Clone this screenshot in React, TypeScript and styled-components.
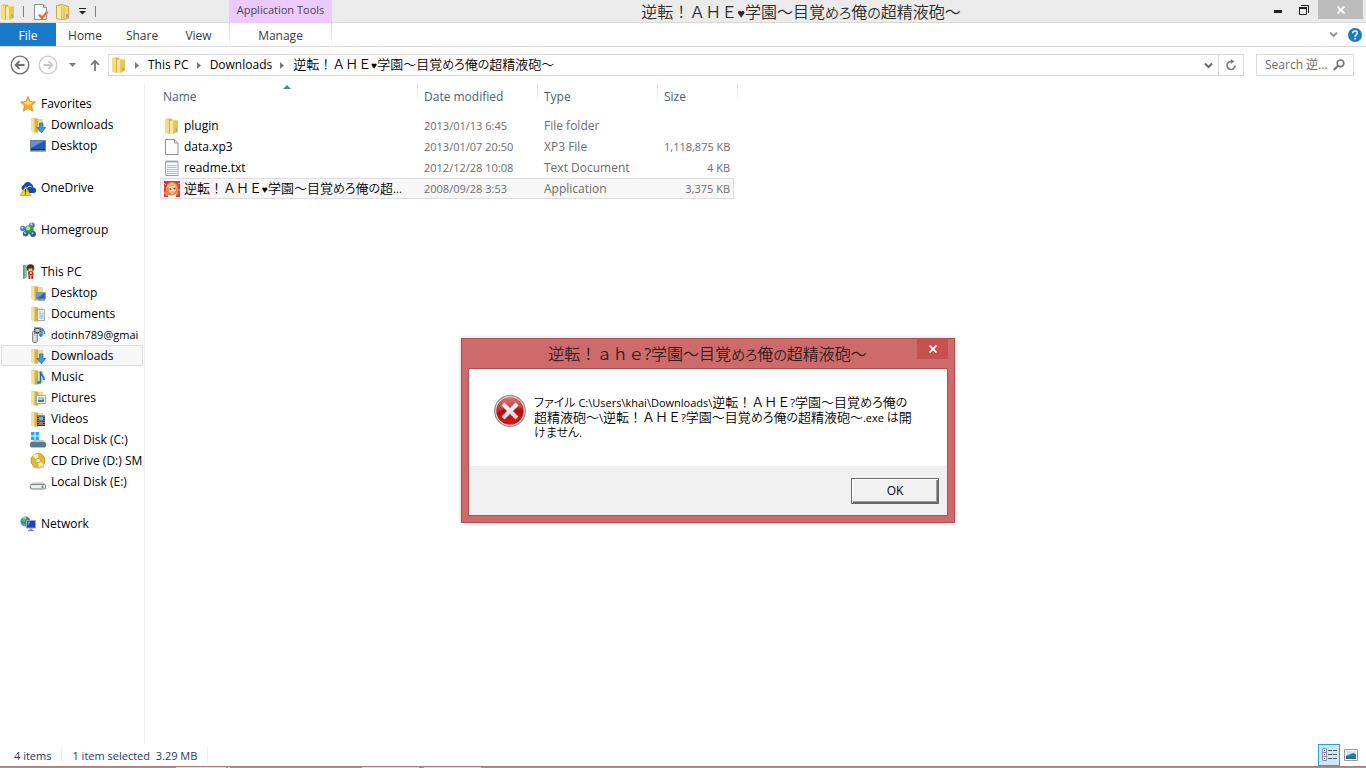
import React from "react";
import styled, { createGlobalStyle, css } from "styled-components";

const Global = createGlobalStyle`
  *, *::before, *::after { box-sizing: border-box; }
  body {
    margin: 0;
    background: #fff;
    color: #000;
    font-family: "Open Sans", "Noto Sans CJK JP", sans-serif;
    font-size: 12px;
    line-height: 16px;
  }
  button, input { font: inherit; color: inherit; }
  button { background: none; border: 0; padding: 0; }
  svg { display: block; flex: none; }
`;

/* ---------- Japanese text with proportional kana ---------- */

const JpText = styled.span<{ $large?: boolean }>`
  font-size: ${(p) => (p.$large ? 16 : 13)}px;
  font-weight: 350;
  white-space: nowrap;
`;
const Kana = styled.span<{ $large?: boolean }>`
  font-size: ${(p) => (p.$large ? 14 : 12)}px;
  font-feature-settings: "palt";
`;
const Heart = styled.span<{ $large?: boolean }>`
  font-family: "DejaVu Sans", sans-serif;
  font-size: ${(p) => (p.$large ? 13 : 10)}px;
`;
const Latin = styled.span<{ $large?: boolean }>`
  font-size: ${(p) => (p.$large ? 16 : 11)}px;
  font-weight: 400;
`;

function Jp({ text, large }: { text: string; large?: boolean }) {
  const runs = text.split(/([\u3040-\u30ff]+|♥|[ -~]+)/).filter(Boolean);
  return (
    <JpText $large={large}>
      {runs.map((run, i) => {
        if (run === "♥") return <Heart key={i} $large={large}>{run}</Heart>;
        if (/^[\u3040-\u30ff]/.test(run)) return <Kana key={i} $large={large}>{run}</Kana>;
        if (/^[ -~]/.test(run)) return <Latin key={i} $large={large}>{run}</Latin>;
        return run;
      })}
    </JpText>
  );
}

/* ---------- Icons ---------- */

const Svg16 = ({ children }: { children: React.ReactNode }) => (
  <svg width="16" height="16" viewBox="0 0 16 16" aria-hidden="true">{children}</svg>
);

const FolderIcon = () => (
  <Svg16>
    <path d="M1 1 5.500.3 8 1v13.500L5 16l-4-1.800z" fill="#e3c255" />
    <path d="M1 1l4 1v13.500l-4-1.500z" fill="#f5dd80" />
    <path d="M5 2 8 1v13l-3 1.500z" fill="#d3aa3c" />
    <path d="M6 3l3-1.500 5 1V14l-5 1.800L6 15.500z" fill="#f3d873" />
    <path d="M9 3.500l5-1V14l-5 1.800z" fill="#e8c558" />
    <path d="M6 3l3 .5v12.300L6 15.500z" fill="#fae9a2" />
    <path d="M11.500 10.500H13v3h-1.500z" fill="#6db2de" />
  </Svg16>
);

const BackFolder = () => (
  <>
    <path d="M1 1h5l2 1v13.500L5 15.500l-4-1.500z" fill="#ead07a" />
    <path d="M1 1l3.500 1v13.500L1 14z" fill="#f5e296" />
    <path d="M4.500 2 8 1.500v14h-3.500z" fill="#d6b551" />
    <path d="M8 2h5v11.500L8 15.500z" fill="#f0da8c" />
    <path d="M7 2v13" stroke="#c8a23f" strokeWidth=".7" />
  </>
);
const DownFolder = () => (
  <Svg16>
    <BackFolder />
    <path d="M9.500 6h3.500v4.500h2.700l-4.400 5.200-4.500-5.200h2.700z" fill="#3b9be0" stroke="#1d6db3" strokeWidth=".7" />
  </Svg16>
);
const DesktopFolder = () => (
  <Svg16>
    <BackFolder />
    <path d="M6.500 7.500h9V14h-9z" fill="#2f63bd" stroke="#8797ad" strokeWidth=".8" />
    <path d="M7 8h7l-6 4.500H7z" fill="#6c9ce4" />
    <path d="M8 15h7" stroke="#4a5a70" />
  </Svg16>
);
const DocsFolder = () => (
  <Svg16>
    <BackFolder />
    <path d="M7.500 3.500h7v11h-7z" fill="#fff" stroke="#8d99a8" strokeWidth=".8" />
    <path d="M9 6h2M12 6h1.500M9 8h4.500M9 10h4.500M9 12h4.500" stroke="#6b8fc0" strokeWidth=".9" />
  </Svg16>
);
const MusicFolder = () => (
  <Svg16>
    <BackFolder />
    <path d="M10.500 3c0 3 4 3.500 3.500 8" fill="none" stroke="#1f86d6" strokeWidth="2" />
    <path d="M10.500 2.500V13" stroke="#1668ad" strokeWidth="1.400" />
    <ellipse cx="9" cy="13.500" rx="2.300" ry="1.700" fill="#2b94e2" />
  </Svg16>
);
const PicsFolder = () => (
  <Svg16>
    <BackFolder />
    <path d="M6.500 5.500h9v8h-9z" fill="#fff" stroke="#8c9097" strokeWidth=".8" />
    <path d="M8 7h6v2.500H8z" fill="#8fc9f1" />
    <path d="M8 9.500l3 .5 3-1V12H8z" fill="#3d8a71" />
  </Svg16>
);
const VideoFolder = () => (
  <Svg16>
    <BackFolder />
    <path d="M7 4.500h8v10.500H7z" fill="#30343c" />
    <path d="M9 5.500h4v4H9z" fill="#7fa8e0" />
    <path d="M9 10.500h4V14H9z" fill="#b4735a" />
    <path d="M8 5v10M14 5v10" stroke="#d8dde5" strokeWidth=".9" strokeDasharray="1 1" />
  </Svg16>
);
const StarIcon = () => (
  <Svg16>
    <path d="M8 .5l2.200 4.900 5.300.7-4 3.500 1.200 5.500L8 12.300l-4.700 2.800 1.200-5.500L.5 6.100l5.300-.7z" fill="#fda92c" stroke="#e38a22" strokeWidth=".9" />
    <path d="M8 2.500l1.500 3.800 3.500.4-5 2.300-4.800-2.300 3.300-.4z" fill="#fee08a" />
  </Svg16>
);
const DesktopIcon = () => (
  <Svg16>
    <path d="M.5 2.500h15v10H.5z" fill="#2458b5" stroke="#6f7f96" />
    <path d="M1 3h13L1 10z" fill="#5f93e0" />
    <path d="M1 11.500h14" stroke="#1c2f4f" />
    <path d="M0 13.500h16" stroke="#a3adba" />
  </Svg16>
);
const OneDriveIcon = () => (
  <Svg16>
    <path d="M1.500 8.500A4 4 0 0 1 4 4.500 4 4 0 0 1 11 3.500 3.500 3.500 0 0 1 13 7.500 2.800 2.800 0 0 1 14 13H5z" fill="#0f4fb3" />
    <path d="M6.500 10.500c-.5-3 2-5 5-3.800" stroke="#fff" strokeWidth=".9" fill="none" />
    <path d="M5.500 6.500 10.800 15.500H.2z" fill="#fcd21c" stroke="#c29400" strokeWidth=".7" />
    <path d="M5.500 9v3.500M5.500 13.300v1.200" stroke="#222" strokeWidth="1.200" />
  </Svg16>
);
const HomegroupIcon = () => (
  <Svg16>
    <circle cx="12" cy="3.200" r="2.800" fill="#4a6fc6" />
    <circle cx="11.500" cy="2.400" r="1.100" fill="#cbdafb" />
    <circle cx="9.200" cy="7.800" r="4.600" fill="#38a33c" />
    <circle cx="8.200" cy="6.300" r="2" fill="#b5eaa9" />
    <circle cx="2.800" cy="6.500" r="2.700" fill="#4f74cf" />
    <circle cx="2.400" cy="5.800" r="1.100" fill="#c5d6fa" />
    <circle cx="5.500" cy="11.800" r="2.700" fill="#3b5fc0" />
    <circle cx="5" cy="11" r="1" fill="#bacbf5" />
    <circle cx="13" cy="12" r="2.900" fill="#3b4f9e" />
    <circle cx="12.500" cy="11.200" r="1" fill="#bacbf5" />
  </Svg16>
);
const UserIcon = () => (
  <Svg16>
    <path d="M3 1l4-.5v13L3 15z" fill="#7cc4ad" />
    <path d="M3 1l1.500.3v13L3 15z" fill="#549c8b" />
    <circle cx="10.500" cy="4" r="3.800" fill="#5b2a18" />
    <path d="M8.500 4.500h4V7h-4z" fill="#f2c29b" />
    <path d="M8 7.500h5.500v4H8z" fill="#dc2c22" />
    <path d="M8.500 11.500h1.800V15H8.500zM11.300 11.500H13V15h-1.700z" fill="#c2241b" />
    <path d="M10 8h1.500v2H10z" fill="#fff" />
  </Svg16>
);
const DeviceIcon = () => (
  <Svg16>
    <rect x="2.500" y="4" width="5" height="11.500" rx="1.500" fill="#c9ccd0" stroke="#74787e" strokeWidth=".8" />
    <path d="M4 .5h7v6H4z" fill="#40464d" />
    <path d="M5.500 2h4v3h-4z" fill="#a9d0ec" />
    <path d="M5 1v5M10 1v5" stroke="#e8ebee" strokeWidth=".8" strokeDasharray="1 1" />
    <path d="M12 1v7M12 1c0 2 3 2 2.500 6" fill="none" stroke="#1f86d6" strokeWidth="1.400" />
    <circle cx="10.800" cy="8.300" r="1.700" fill="#1f86d6" />
    <path d="M5 9v4" stroke="#f2f3f4" />
  </Svg16>
);
const DriveShape = ({ top, front }: { top: string; front: string }) => (
  <>
    <path d="M3 8h10l3 3H0z" fill={top} />
    <rect x=".5" y="10.500" width="15" height="4.500" rx="1" fill={front} stroke="#6b7178" strokeWidth=".9" />
    <path d="M12.500 11.500v2.500" stroke="#36b32d" strokeWidth="1.500" />
  </>
);
const WinDriveIcon = () => (
  <Svg16>
    <DriveShape top="#b5c3cd" front="#4f7c8c" />
    <path d="M1 0h3.500v3.500H1zM5.500 0H9v3.500H5.500zM1 4.500h3.500V8H1zM5.500 4.500H9V8H5.500z" fill="#19b1ea" />
  </Svg16>
);
const DriveIcon = () => <Svg16><DriveShape top="#d2d4d8" front="#eceded" /></Svg16>;
const DiscIcon = () => (
  <Svg16>
    <circle cx="8" cy="7.500" r="7" fill="#e3ba2e" stroke="#b28d1e" strokeWidth=".8" />
    <path d="M8 7.500 2.500 3A7 7 0 0 1 8 .8zM8 7.500l6 3.800A7 7 0 0 1 9 14.300z" fill="#fbeeb0" />
    <circle cx="8" cy="7.500" r="2.200" fill="#fff" stroke="#b59a45" strokeWidth=".7" />
    <path d="M2 12.500c3 2.500 9 2.500 12 0v1.800c-3 1.800-9 1.800-12 0z" fill="#c5c7ca" />
  </Svg16>
);
const NetworkIcon = () => (
  <Svg16>
    <circle cx="5.500" cy="5.500" r="5" fill="#2f86cf" />
    <path d="M2 2.500c2-2 4-1.500 5 0L5 5 3 6zM2.500 7.500l3 .5-.5 2.500z" fill="#5dc04a" />
    <path d="M3 1.500l3 .5" stroke="#d4f0ff" />
    <path d="M6.500 4.500h9v7.500h-9z" fill="#1c3fc4" stroke="#9aa7bc" />
    <path d="M7.500 5.500h3L8 10z" fill="#6d8ff0" />
    <path d="M9.500 12.500h3V14h-3zM8 14h6v1.200H8z" fill="#8a94a3" />
  </Svg16>
);
const BlankFileIcon = () => (
  <Svg16>
    <path d="M1.500.5h9l3.500 3.500v11.500H1.500z" fill="#fcfcfc" stroke="#8f8f8f" />
    <path d="M10.500.5V4H14" fill="#e6e6e6" stroke="#a2a2a2" />
  </Svg16>
);
const TextFileIcon = () => (
  <Svg16>
    <path d="M1.500 1.500h12.500v14H1.500z" fill="#f6fafc" stroke="#98a2a8" />
    <path d="M3 0v3M5 0v3M7 0v3M9 0v3M11 0v3M13 0v3" stroke="#a7b0b5" />
    <path d="M3 5.500h9.500M3 7.500h9.500M3 9.500h9.500M3 11.500h9.500M3 13.500h9.500" stroke="#9fbdd0" strokeWidth=".9" />
  </Svg16>
);
const GameIcon = () => (
  <Svg16>
    <path d="M0 0h16v16H0z" fill="#d3384d" />
    <path d="M1.500 15C1 8 2 1 8 1s7 6 6 13z" fill="#e38a3e" />
    <path d="M4.500 5.500 11 4.500l1 4.500-3.500 4.500L5 10.500z" fill="#fcdcc4" />
    <path d="M2.500 8C3 4 6 2 8 1.500c2 .5 4.500 2.500 5 6-2-3-4-3.500-5-3.500S4.500 5 2.500 8z" fill="#fbc566" />
    <path d="M5.500 8h1.800M9.500 7.500h1.800" stroke="#7a2231" strokeWidth="1.300" />
    <path d="M7.500 11h2" stroke="#d2525a" />
    <path d="M4 14l4 .5 4-1.500v3H4z" fill="#fff" />
    <path d="M0 2l2 2M14 3l2-1M0 12h2M14.500 8l1.500 2" stroke="#f6a2b4" />
  </Svg16>
);
const PropertiesIcon = () => (
  <Svg16>
    <path d="M1.500.5h9l3 3v12h-12z" fill="#fbfbfd" stroke="#8b8f99" />
    <path d="M10.500.5v3h3" fill="#dfe3ea" stroke="#8b8f99" />
    <path d="M6 10.500l3 3.500 5.500-6.500" fill="none" stroke="#e8703f" strokeWidth="2.600" />
  </Svg16>
);
const NewFolderIcon = () => (
  <Svg16>
    <path d="M.5 1.500 6 .5l6.500 2v12L6 15.500l-5.500-1z" fill="#f4d774" stroke="#dba63a" />
    <path d="M1 2l4 .8V15l-4-1z" fill="#fbecb0" />
    <path d="M5.500 3v12M8 4v11" stroke="#e0b04a" strokeWidth=".8" />
    <path d="M10 10h1.800v3.500H10z" fill="#6aaede" />
  </Svg16>
);
const CustomizeIcon = () => (
  <svg width="7" height="7" viewBox="0 0 7 7" aria-hidden="true">
    <path d="M0 .5h7" stroke="#222" />
    <path d="M0 3h7L3.500 6.500z" fill="#222" />
  </svg>
);
const NavIcon = ({ forward }: { forward?: boolean }) => (
  <svg width="20" height="20" viewBox="0 0 20 20" fill="none" stroke={forward ? "#c9c9c9" : "#6e6e6e"} aria-hidden="true">
    <circle cx="10" cy="10" r="8.800" strokeWidth="1.300" />
    <path d={forward ? "M5.500 10h8.500M10.500 6.200l3.800 3.800-3.800 3.800" : "M14.500 10H6M9.500 6.200 5.700 10l3.800 3.800"} strokeWidth="1.900" />
  </svg>
);
const CaretIcon = () => (
  <svg width="7" height="4" viewBox="0 0 7 4" aria-hidden="true"><path d="M0 0h7L3.500 4z" fill="#7a7a7a" /></svg>
);
const UpIcon = () => (
  <svg width="10" height="13" viewBox="0 0 10 13" fill="none" stroke="#777" strokeWidth="1.800" aria-hidden="true">
    <path d="M5 12V2M1 6l4-4.200L9 6" />
  </svg>
);
const CrumbArrow = () => (
  <svg width="4" height="7" viewBox="0 0 4 7" aria-hidden="true"><path d="M0 0l4 3.500L0 7z" fill="#777" /></svg>
);
const ChevronIcon = ({ color = "#6b6b6b" }: { color?: string }) => (
  <svg width="9" height="7" viewBox="0 0 9 7" fill="none" stroke={color} strokeWidth="2" aria-hidden="true">
    <path d="M1 1.500l3.500 3.500L8 1.500" />
  </svg>
);
const RefreshIcon = () => (
  <svg width="12" height="12" viewBox="0 0 12 12" fill="none" stroke="#777" strokeWidth="1.600" aria-hidden="true">
    <path d="M10 6.500A4 4 0 1 1 6.500 2.500" />
    <path d="M5.800 0v5l3.600-2.500z" fill="#777" stroke="none" />
  </svg>
);
const SearchIcon = () => (
  <svg width="12" height="12" viewBox="0 0 12 12" fill="none" stroke="#777" aria-hidden="true">
    <circle cx="7.500" cy="4.300" r="3.300" strokeWidth="1.700" />
    <path d="M5 6.800.8 11" strokeWidth="2" />
  </svg>
);
const HelpIcon = () => (
  <svg width="14" height="14" viewBox="0 0 14 14" aria-hidden="true">
    <circle cx="7" cy="7" r="7" fill="#1979ca" />
    <path d="M4.800 5.200C4.800 2.300 9.300 2.300 9.300 5c0 1.800-2.200 1.800-2.200 3.700M7.100 9.800v1.800" fill="none" stroke="#fff" strokeWidth="1.600" />
  </svg>
);
const MinimizeIcon = () => (
  <svg width="8" height="6" viewBox="0 0 8 6" aria-hidden="true"><path d="M0 3h8v3H0z" fill="#222" /></svg>
);
const RestoreIcon = () => (
  <svg width="10" height="10" viewBox="0 0 10 10" fill="none" stroke="#222" aria-hidden="true">
    <path d="M.5 3v6.500h7V3M2 .5h7.500V8" />
    <path d="M0 3h8" strokeWidth="2" />
  </svg>
);
const CloseIcon = () => (
  <svg width="8" height="8" viewBox="0 0 8 8" fill="none" stroke="#fff" strokeWidth="1.800" aria-hidden="true">
    <path d="M.5.5l7 7M7.500.5l-7 7" />
  </svg>
);
const ErrorIcon = () => (
  <svg width="32" height="32" viewBox="0 0 32 32" aria-label="Error" role="img">
    <defs>
      <linearGradient id="err" x1="0" y1="0" x2="0" y2="1">
        <stop offset="0" stopColor="#dc5f5b" />
        <stop offset=".5" stopColor="#b30d10" />
        <stop offset="1" stopColor="#d8171a" />
      </linearGradient>
      <linearGradient id="cross" x1="0" y1="0" x2="0" y2="1">
        <stop offset="0" stopColor="#fff" />
        <stop offset="1" stopColor="#cfcfcf" />
      </linearGradient>
    </defs>
    <circle cx="16" cy="16" r="15.300" fill="#e4e4e4" stroke="#8b8b8b" strokeWidth="1.200" />
    <circle cx="16" cy="16" r="13.700" fill="url(#err)" />
    <path d="M3 14a13.200 13.200 0 0 1 26 0c-8-3-17-3-26 4z" fill="#fff" opacity=".14" />
    <path d="M10.500 7.500 16 13l5.500-5.500 3 3L19 16l5.500 5.500-3 3L16 19l-5.500 5.500-3-3L13 16l-5.500-5.500z" fill="url(#cross)" />
  </svg>
);
const DetailsViewIcon = () => (
  <svg width="15" height="14" viewBox="0 0 15 14" fill="none" aria-hidden="true">
    <path d="M.5.500h4v4h-4zM.5 4.500h4v4h-4zM.5 8.500h4v4h-4z" fill="#fff" stroke="#8394a6" />
    <path d="M2 2h1v1H2zM2 10h1v1H2z" fill="#31589c" />
    <path d="M2 6h1v1H2z" fill="#c02020" />
    <path d="M6 2.500h4M11 2.500h4M6 6.500h4M11 6.500h4M6 10.500h4M11 10.500h4" stroke="#4d5d6d" />
  </svg>
);
const ThumbViewIcon = () => (
  <svg width="14" height="12" viewBox="0 0 14 12" aria-hidden="true">
    <path d="M.5.500h13v11H.5z" fill="#fff" stroke="#9a9a9a" />
    <path d="M2 2h10v8H2z" fill="#2a78c4" />
    <path d="M2 2h10v3C9 3 6 5 2 7z" fill="#c9ebf8" />
    <path d="M2 9l4-1.500L12 9v1H2z" fill="#2f6d4c" />
  </svg>
);
const SortArrow = styled.span`
  position: absolute;
  top: 1px;
  left: 123px;
  border: 4px solid transparent;
  border-top: 0;
  border-bottom-color: #4a89ae;
`;

/* ---------- Window frame ---------- */

const Window = styled.main`
  min-height: 100vh;
  display: flex;
  flex-direction: column;
`;
const TitleBar = styled.header`
  display: flex;
  height: 23px;
  background: #ebebeb;
  border-bottom: 1px solid #d9d9d9;
`;
const QuickAccess = styled.div`
  width: 229px;
  display: flex;
  align-items: center;
  padding-top: 1px;
`;
const QuickDivider = styled.span`
  width: 1px;
  height: 11px;
  margin: 0 9px 0 7px;
  background: #808080;
  &:last-child { margin-left: 9px; }
`;
const QuickButton = styled.button`
  display: flex;
  margin-right: 7px;
  &:last-of-type { margin-right: 0; }
`;
const ContextTitle = styled.div`
  width: 103px;
  height: 23px;
  padding-top: 2px;
  text-align: center;
  font-size: 11px;
  background: #ebcbff;
  color: #4c4052;
`;
const WindowTitle = styled.h1`
  flex: 1;
  margin: 0;
  padding-left: 5px;
  font-weight: 400;
  text-align: center;
  line-height: 18px;
  color: #2b2b2b;
`;
const FrameButton = styled.button<{ $close?: boolean }>`
  width: 26px;
  height: 19px;
  display: flex;
  align-items: center;
  justify-content: center;
  ${(p) => p.$close && css`
    width: 45px;
    margin: 0 3px 0 1px;
    background: #bcbcbc;
  `}
`;

/* ---------- Ribbon ---------- */

const Ribbon = styled.nav`
  display: flex;
  align-items: center;
  height: 24px;
  border-bottom: 1px solid #d9d9d9;
`;
const RibbonTab = styled.button<{ $width: number; $file?: boolean }>`
  width: ${(p) => p.$width}px;
  height: 23px;
  color: #3b3b3b;
  padding-top: 2px;
  ${(p) => p.$file && css`
    background: #1979ca;
    color: #fff;
    margin-right: 1px;
  `}
`;
const ContextTab = styled(RibbonTab)`
  margin-left: 3px;
  border: 1px solid;
  border-width: 0 1px;
  border-image: linear-gradient(#cfcfcf, #fff) 1;
`;
const RibbonEnd = styled.div`
  margin-left: auto;
  display: flex;
  align-items: center;
  gap: 10px;
  padding-right: 4px;
`;
const IconButton = styled.button`
  display: flex;
  align-items: center;
`;

/* ---------- Address bar ---------- */

const AddressRow = styled.div`
  display: flex;
  align-items: center;
  height: 36px;
  padding: 0 12px 0 10px;
`;
const NavButtons = styled.div`
  display: flex;
  align-items: center;
  width: 98px;
`;
const NavButton = styled(IconButton)`
  &:nth-child(2) { margin-left: 8px; }
  &:nth-child(3) { margin-left: 11px; }
  &:nth-child(4) { margin-left: 14px; }
`;
const AddressBox = styled.div`
  flex: 1;
  display: flex;
  align-items: center;
  height: 22px;
  padding-left: 2px;
  border: 1px solid #d9d9d9;
`;
const Crumb = styled.a`
  display: flex;
  align-items: center;
  gap: 9px;
  margin-left: 8px;
  color: #000;
  text-decoration: none;
  white-space: nowrap;
`;
const AddressButton = styled.button<{ $divided?: boolean }>`
  width: 25px;
  height: 20px;
  display: flex;
  align-items: center;
  justify-content: center;
  ${(p) => p.$divided ? "border-left: 1px solid #d9d9d9;" : "margin-left: auto; padding-left: 6px;"}
`;
const SearchBox = styled.label`
  display: flex;
  align-items: center;
  width: 98px;
  height: 22px;
  margin-left: 12px;
  padding: 0 8px;
  border: 1px solid #d9d9d9;
`;
const SearchInput = styled.input`
  flex: 1;
  min-width: 0;
  padding: 0;
  border: 0;
  outline: 0;
  background: none;
  &::placeholder { color: #6d6d6d; opacity: 1; }
`;

/* ---------- Body ---------- */

const Body = styled.div`
  flex: 1;
  display: flex;
  padding-top: 1px;
`;
const Sidebar = styled.nav`
  width: 145px;
  padding: 9px 1px 9px;
  border-right: 1px solid #f0f0f0;
`;
const Group = styled.ul`
  list-style: none;
  margin: 0 0 21px;
  padding: 0;
`;
const TreeItem = styled.a<{ $child?: boolean; $selected?: boolean; $small?: boolean }>`
  display: flex;
  align-items: center;
  gap: 5px;
  height: 21px;
  padding-left: ${(p) => (p.$child ? 28 : 18)}px;
  border: 1px solid ${(p) => (p.$selected ? "#dedede" : "transparent")};
  background: ${(p) => (p.$selected ? "#f7f7f7" : "none")};
  font-size: ${(p) => (p.$small ? 11 : 12)}px;
  white-space: nowrap;
  color: #000;
  text-decoration: none;
`;
const Files = styled.section`
  flex: 1;
  padding-left: 15px;
`;
const FileTable = styled.table`
  width: 574px;
  table-layout: fixed;
  border-collapse: separate;
  border-spacing: 0;
`;
const HeadCell = styled.th<{ $width: number; $last?: boolean }>`
  position: relative;
  width: ${(p) => p.$width}px;
  height: 31px;
  padding: 5px 0 0 7px;
  vertical-align: top;
  text-align: left;
  font-weight: 400;
  color: #4c607a;
  &::after {
    content: "";
    position: absolute;
    top: 0;
    right: ${(p) => (p.$last ? -4 : -1)}px;
    width: 1px;
    height: 21px;
    background: linear-gradient(#dbe5f1, #fff);
  }
`;
const NameHeadCell = styled(HeadCell)`
  padding-left: 3px;
`;
const Cell = styled.td<{ $selected?: boolean; $end?: boolean; $numeric?: boolean }>`
  height: 21px;
  padding: 0 4px 0 7px;
  color: #6d6d6d;
  font-size: ${(p) => (p.$numeric ? 11 : 12)}px;
  text-align: ${(p) => (p.$end ? "right" : "left")};
  white-space: nowrap;
  border: 0 solid #dedede;
  ${(p) => p.$selected && css`
    background: #f7f7f7;
    border-width: 1px 0;
    &:first-child { border-left-width: 1px; }
    &:last-child { border-right-width: 1px; padding-right: 3px; }
  `}
`;
const NameCell = styled(Cell)`
  padding-left: ${(p) => (p.$selected ? 3 : 4)}px;
`;
const FileName = styled.div`
  display: flex;
  align-items: center;
  gap: 4px;
  height: 19px;
  color: #000;
`;

/* ---------- Status bar ---------- */

const StatusBar = styled.footer`
  display: flex;
  align-items: center;
  height: 22px;
  padding-left: 14px;
  font-size: 11px;
  color: #1e395b;
  white-space: pre;
`;
const StatusText = styled.span`
  margin-right: 10px;
  padding: 1px 10px 0 0;
  border-right: 1px solid #f0f0f0;
`;
const ViewButtons = styled.div`
  display: flex;
  margin-left: auto;
  padding-right: 4px;
`;
const ViewButton = styled.button<{ $active?: boolean }>`
  width: 22px;
  height: 22px;
  display: flex;
  align-items: center;
  justify-content: center;
  ${(p) => p.$active && css`
    background: #cce8f6;
    border: 1px solid #26a0da;
  `}
`;
const TaskbarEdge = styled.div`
  display: flex;
  height: 2px;
  background: #b58a8c;
  border-top: 1px solid #a87d7f;
`;
const TaskButton = styled.span<{ $gap: number; $width: number }>`
  width: ${(p) => p.$width}px;
  margin-left: ${(p) => p.$gap}px;
  background: #e6d8d9;
`;

/* ---------- Error dialog ---------- */

const Dialog = styled.section`
  position: absolute;
  left: 461px;
  top: 338px;
  width: 494px;
  padding: 0 6px 6px;
  background: #cf6a6a;
  border: 1px solid #ad5054;
  box-shadow: 0 0 4px rgba(0, 0, 0, 0.2);
`;
const DialogHead = styled.header`
  display: flex;
  height: 29px;
`;
const DialogTitle = styled.h2`
  flex: 1;
  margin: 0;
  padding-left: 30px;
  font-weight: 400;
  line-height: 28px;
  text-align: center;
  color: #2f1d1d;
`;
const DialogClose = styled.button`
  width: 31px;
  height: 20px;
  display: flex;
  align-items: center;
  justify-content: center;
  background: #c75050;
`;
const DialogBody = styled.div`
  border: 1px solid #ad5054;
  background: #fff;
`;
const Message = styled.div`
  display: flex;
  gap: 8px;
  height: 97px;
  padding: 26px 0 0 25px;
`;
const MessageText = styled.p`
  margin: 0;
  line-height: 15px;
`;
const Line = styled.span`
  display: block;
  height: 15px;
  white-space: nowrap;
`;
const Actions = styled.div`
  display: flex;
  justify-content: flex-end;
  height: 49px;
  padding: 12px 8px 11px;
  background: #f0f0f0;
`;
const OkButton = styled.button`
  width: 88px;
  height: 26px;
  background: #f0f0f0;
  border: 1px solid #696969;
  box-shadow: inset 1px 1px #fff, inset -1px -1px #696969, inset -2px -2px #a0a0a0;
`;

/* ---------- Data ---------- */

const FOLDER = "逆転！ＡＨＥ♥学園～目覚めろ俺の超精液砲～";

type Item = { label: string; icon: React.ReactNode; child?: boolean; selected?: boolean; small?: boolean };
const tree: Item[][] = [
  [
    { label: "Favorites", icon: <StarIcon /> },
    { label: "Downloads", icon: <DownFolder />, child: true },
    { label: "Desktop", icon: <DesktopIcon />, child: true },
  ],
  [{ label: "OneDrive", icon: <OneDriveIcon /> }],
  [{ label: "Homegroup", icon: <HomegroupIcon /> }],
  [
    { label: "This PC", icon: <UserIcon /> },
    { label: "Desktop", icon: <DesktopFolder />, child: true },
    { label: "Documents", icon: <DocsFolder />, child: true },
    { label: "dotinh789@gmai", icon: <DeviceIcon />, child: true, small: true },
    { label: "Downloads", icon: <DownFolder />, child: true, selected: true },
    { label: "Music", icon: <MusicFolder />, child: true },
    { label: "Pictures", icon: <PicsFolder />, child: true },
    { label: "Videos", icon: <VideoFolder />, child: true },
    { label: "Local Disk (C:)", icon: <WinDriveIcon />, child: true },
    { label: "CD Drive (D:) SM", icon: <DiscIcon />, child: true },
    { label: "Local Disk (E:)", icon: <DriveIcon />, child: true },
  ],
  [{ label: "Network", icon: <NetworkIcon /> }],
];

const files = [
  { name: "plugin", icon: <FolderIcon />, date: "2013/01/13 6:45", type: "File folder", size: "" },
  { name: "data.xp3", icon: <BlankFileIcon />, date: "2013/01/07 20:50", type: "XP3 File", size: "1,118,875 KB" },
  { name: "readme.txt", icon: <TextFileIcon />, date: "2012/12/28 10:08", type: "Text Document", size: "4 KB" },
  { name: "逆転！ＡＨＥ♥学園～目覚めろ俺の超...", icon: <GameIcon />, date: "2008/09/28 3:53", type: "Application", size: "3,375 KB", selected: true },
];

export default function App() {
  return (
    <>
      <Global />
      <Window>
        <TitleBar>
          <QuickAccess>
            <FolderIcon />
            <QuickDivider />
            <QuickButton aria-label="Properties"><PropertiesIcon /></QuickButton>
            <QuickButton aria-label="New folder"><NewFolderIcon /></QuickButton>
            <QuickButton aria-label="Customize toolbar"><CustomizeIcon /></QuickButton>
            <QuickDivider />
          </QuickAccess>
          <ContextTitle>Application Tools</ContextTitle>
          <WindowTitle><Jp text={FOLDER} large /></WindowTitle>
          <FrameButton aria-label="Minimize"><MinimizeIcon /></FrameButton>
          <FrameButton aria-label="Restore"><RestoreIcon /></FrameButton>
          <FrameButton $close aria-label="Close"><CloseIcon /></FrameButton>
        </TitleBar>

        <Ribbon>
          <RibbonTab $width={56} $file>File</RibbonTab>
          <RibbonTab $width={56}>Home</RibbonTab>
          <RibbonTab $width={58}>Share</RibbonTab>
          <RibbonTab $width={55}>View</RibbonTab>
          <ContextTab $width={103}>Manage</ContextTab>
          <RibbonEnd>
            <IconButton aria-label="Expand the ribbon"><ChevronIcon color="#9a9a9a" /></IconButton>
            <IconButton aria-label="Help"><HelpIcon /></IconButton>
          </RibbonEnd>
        </Ribbon>

        <AddressRow>
          <NavButtons>
            <NavButton aria-label="Back"><NavIcon /></NavButton>
            <NavButton aria-label="Forward"><NavIcon forward /></NavButton>
            <NavButton aria-label="Recent locations"><CaretIcon /></NavButton>
            <NavButton aria-label="Up"><UpIcon /></NavButton>
          </NavButtons>
          <AddressBox>
            <FolderIcon />
            <Crumb href="#"><CrumbArrow />This PC</Crumb>
            <Crumb href="#"><CrumbArrow />Downloads</Crumb>
            <Crumb href="#"><CrumbArrow /><Jp text={FOLDER} /></Crumb>
            <AddressButton aria-label="Previous locations"><ChevronIcon /></AddressButton>
            <AddressButton $divided aria-label="Refresh"><RefreshIcon /></AddressButton>
          </AddressBox>
          <SearchBox>
            <SearchInput aria-label="Search" placeholder="Search 逆..." />
            <SearchIcon />
          </SearchBox>
        </AddressRow>

        <Body>
          <Sidebar>
            {tree.map((group, g) => (
              <Group key={g}>
                {group.map((item) => (
                  <li key={item.label}>
                    <TreeItem href="#" $child={item.child} $selected={item.selected} $small={item.small}>
                      {item.icon}
                      {item.label}
                    </TreeItem>
                  </li>
                ))}
              </Group>
            ))}
          </Sidebar>
          <Files>
            <FileTable>
              <thead>
                <tr>
                  <NameHeadCell $width={257}>Name<SortArrow /></NameHeadCell>
                  <HeadCell $width={120}>Date modified</HeadCell>
                  <HeadCell $width={120}>Type</HeadCell>
                  <HeadCell $width={77} $last>Size</HeadCell>
                </tr>
              </thead>
              <tbody>
                {files.map((f) => (
                  <tr key={f.name}>
                    <NameCell $selected={f.selected}>
                      <FileName>{f.icon}{f.selected ? <Jp text={f.name} /> : f.name}</FileName>
                    </NameCell>
                    <Cell $selected={f.selected} $numeric>{f.date}</Cell>
                    <Cell $selected={f.selected}>{f.type}</Cell>
                    <Cell $selected={f.selected} $numeric $end>{f.size}</Cell>
                  </tr>
                ))}
              </tbody>
            </FileTable>
          </Files>
        </Body>

        <StatusBar>
          <StatusText>4 items</StatusText>
          <StatusText>1 item selected  3.29 MB</StatusText>
          <ViewButtons>
            <ViewButton $active aria-label="Details view"><DetailsViewIcon /></ViewButton>
            <ViewButton aria-label="Large thumbnails"><ThumbViewIcon /></ViewButton>
          </ViewButtons>
        </StatusBar>
        <TaskbarEdge>
          <TaskButton $gap={176} $width={50} />
          <TaskButton $gap={2} $width={2} />
          <TaskButton $gap={132} $width={57} />
          <TaskButton $gap={5} $width={57} />
        </TaskbarEdge>
      </Window>

      <Dialog role="alertdialog" aria-labelledby="dialog-title">
        <DialogHead>
          <DialogTitle id="dialog-title"><Jp text="逆転！ａｈｅ?学園～目覚めろ俺の超精液砲～" large /></DialogTitle>
          <DialogClose aria-label="Close"><CloseIcon /></DialogClose>
        </DialogHead>
        <DialogBody>
          <Message>
            <ErrorIcon />
            <MessageText>
              <Line><Jp text="ファイル C:\Users\khai\Downloads\逆転！ＡＨＥ?学園～目覚めろ俺の" /></Line>
              <Line><Jp text="超精液砲～\逆転！ＡＨＥ?学園～目覚めろ俺の超精液砲～.exe は開" /></Line>
              <Line><Jp text="けません." /></Line>
            </MessageText>
          </Message>
          <Actions>
            <OkButton>OK</OkButton>
          </Actions>
        </DialogBody>
      </Dialog>
    </>
  );
}
